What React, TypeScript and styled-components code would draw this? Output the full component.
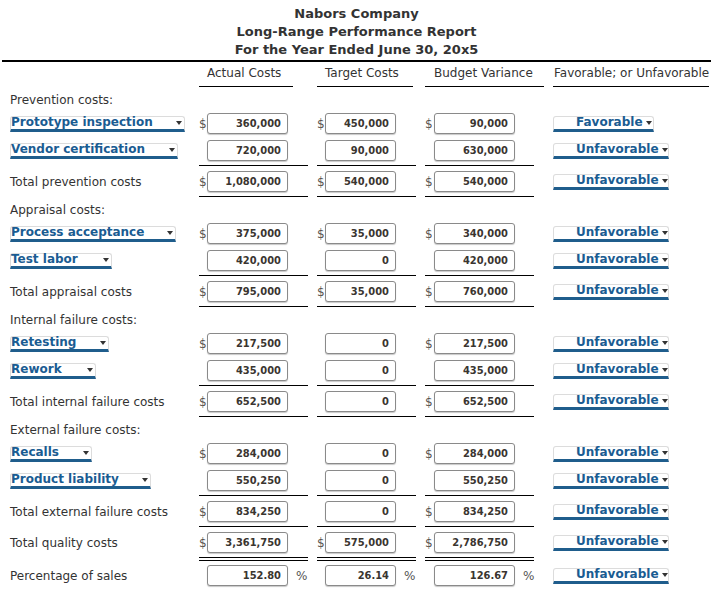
import styled, { createGlobalStyle } from "styled-components";

const GlobalStyle = createGlobalStyle`
  body {
    margin: 0;
    background: #fff;
    font-family: "DejaVu Sans", Verdana, sans-serif;
    color: #333;
  }
`;

const COLS = "197px 118px 108px 128px 158px";

const Report = styled.div`
  width: 709px;
  margin-left: 2px;
  font-size: 12px;
`;

const Heading = styled.header`
  padding: 5px 0 1px;
  border-bottom: 2px solid #000;
  text-align: center;
  font-weight: bold;
  font-size: 13px;
  line-height: 18px;
  color: #333;
`;

const HeadRow = styled.div`
  display: grid;
  grid-template-columns: ${COLS};
`;

const HeadCell = styled.div<{ $w: number; $pl: number }>`
  width: ${(p) => p.$w}px;
  padding: 3px 0 5px ${(p) => p.$pl}px;
  box-sizing: border-box;
  line-height: 16px;
  white-space: nowrap;
  border-bottom: 1px solid #000;
`;

const SectionTitle = styled.div`
  padding: 5px 0 2px 8px;
  line-height: 16px;
`;

const Money = styled.div<{ $w: number }>`
  width: ${(p) => p.$w}px;
  box-sizing: border-box;
`;

const Row = styled.div<{ $top: number; $bottom: number; $rule?: "single" | "double" }>`
  display: grid;
  grid-template-columns: ${COLS};
  & > * {
    display: flex;
    align-items: center;
    padding-top: ${(p) => p.$top}px;
    padding-bottom: ${(p) => p.$bottom}px;
    border-bottom: ${(p) =>
      p.$rule === "double"
        ? "4px double transparent"
        : p.$rule
        ? "1px solid transparent"
        : "0"};
  }
  & > ${Money} {
    border-bottom-color: #000;
  }
`;

const Label = styled.div`
  padding-left: 8px;
  line-height: 16px;
  white-space: nowrap;
`;

const Dollar = styled.span<{ $w: number }>`
  width: ${(p) => p.$w}px;
  flex: none;
  font-size: 12px;
  line-height: 16px;
  color: #5a5550;
`;

const Amount = styled.input<{ $w: number }>`
  width: ${(p) => p.$w}px;
  height: 21px;
  margin: 0;
  padding: 0 6px 0 0;
  box-sizing: border-box;
  border: 1px solid #8a8a8a;
  border-radius: 3px;
  box-shadow: 0 1px 1px rgba(0, 0, 0, 0.22);
  background: #fff;
  text-align: right;
  font-family: "DejaVu Sans Condensed", "DejaVu Sans", sans-serif;
  font-stretch: condensed;
  font-weight: bold;
  font-size: 11px;
  color: #3a3530;
  outline: none;
`;

const Percent = styled.span`
  margin-left: 8px;
  font-size: 12px;
  color: #555;
`;

const Select = styled.div<{ $w: number; $pl: number }>`
  display: inline-flex;
  align-items: center;
  width: ${(p) => p.$w}px;
  height: 16px;
  box-sizing: border-box;
  padding: 0 2px 0 ${(p) => p.$pl}px;
  border: 1px solid #dcdcdc;
  border-bottom: 3px solid #1f5d8c;
  border-radius: 3px 3px 0 0;
  background: #fff;
  color: #1a5c92;
  font-weight: bold;
  font-size: 12px;
  line-height: 13px;
  white-space: nowrap;
  cursor: pointer;
`;

const SelectText = styled.span`
  flex: 1;
`;

const Caret = styled.span`
  flex: none;
  width: 0;
  height: 0;
  margin: 1px 0 0 3px;
  border-style: solid;
  border-width: 4px 3px 0;
  border-color: #333 transparent transparent;
`;

const Picker = ({ text, w, pl = 0 }: { text: string; w: number; pl?: number }) => (
  <Select $w={w} $pl={pl}>
    <SelectText>{text}</SelectText>
    <Caret />
  </Select>
);

type Verdict = "Favorable" | "Unfavorable";

interface Line {
  label: string;
  pick?: number;
  vals: [string, string, string];
  dollar: boolean;
  verdict: Verdict;
}

const spec = [
  { w: 109, d: 8, iw: 81 },
  { w: 99, d: 8, iw: 71 },
  { w: 109, d: 9, iw: 81 },
];

const MoneyCells = ({ vals, dollar, pct }: { vals: string[]; dollar: boolean; pct?: boolean }) => (
  <>
    {vals.map((v, i) => (
      <Money key={i} $w={spec[i].w}>
        <Dollar $w={spec[i].d}>{dollar && v !== "0" ? "$" : ""}</Dollar>
        <Amount $w={spec[i].iw} readOnly value={v} />
        {pct && <Percent>%</Percent>}
      </Money>
    ))}
  </>
);

const VerdictCell = ({ v }: { v: Verdict }) => (
  <div>
    <Picker text={v} w={v === "Favorable" ? 101 : 116} pl={22} />
  </div>
);

interface Section {
  title: string;
  items: Line[];
  total: Line;
}

const sections: Section[] = [
  {
    title: "Prevention costs:",
    items: [
      { label: "Prototype inspection", pick: 175, vals: ["360,000", "450,000", "90,000"], dollar: true, verdict: "Favorable" },
      { label: "Vendor certification", pick: 168, vals: ["720,000", "90,000", "630,000"], dollar: false, verdict: "Unfavorable" },
    ],
    total: { label: "Total prevention costs", vals: ["1,080,000", "540,000", "540,000"], dollar: true, verdict: "Unfavorable" },
  },
  {
    title: "Appraisal costs:",
    items: [
      { label: "Process acceptance", pick: 166, vals: ["375,000", "35,000", "340,000"], dollar: true, verdict: "Unfavorable" },
      { label: "Test labor", pick: 102, vals: ["420,000", "0", "420,000"], dollar: false, verdict: "Unfavorable" },
    ],
    total: { label: "Total appraisal costs", vals: ["795,000", "35,000", "760,000"], dollar: true, verdict: "Unfavorable" },
  },
  {
    title: "Internal failure costs:",
    items: [
      { label: "Retesting", pick: 99, vals: ["217,500", "0", "217,500"], dollar: true, verdict: "Unfavorable" },
      { label: "Rework", pick: 86, vals: ["435,000", "0", "435,000"], dollar: false, verdict: "Unfavorable" },
    ],
    total: { label: "Total internal failure costs", vals: ["652,500", "0", "652,500"], dollar: true, verdict: "Unfavorable" },
  },
  {
    title: "External failure costs:",
    items: [
      { label: "Recalls", pick: 82, vals: ["284,000", "0", "284,000"], dollar: true, verdict: "Unfavorable" },
      { label: "Product liability", pick: 141, vals: ["550,250", "0", "550,250"], dollar: false, verdict: "Unfavorable" },
    ],
    total: { label: "Total external failure costs", vals: ["834,250", "0", "834,250"], dollar: true, verdict: "Unfavorable" },
  },
];

function App() {
  return (
    <Report>
      <GlobalStyle />
      <Heading>
        <div>Nabors Company</div>
        <div>Long-Range Performance Report</div>
        <div>For the Year Ended June 30, 20x5</div>
      </Heading>
      <HeadRow>
        <div />
        <HeadCell $w={94} $pl={8}>Actual Costs</HeadCell>
        <HeadCell $w={96} $pl={8}>Target Costs</HeadCell>
        <HeadCell $w={119} $pl={9}>Budget Variance</HeadCell>
        <HeadCell $w={156} $pl={1}>Favorable; or Unfavorable</HeadCell>
      </HeadRow>
      {sections.map((s) => (
        <div key={s.title}>
          <SectionTitle>{s.title}</SectionTitle>
          {s.items.map((it, i) => {
            const last = i === s.items.length - 1;
            return (
              <Row key={it.label} $top={3} $bottom={last ? 4 : 3} $rule={last ? "single" : undefined}>
                <Label>
                  <Picker text={it.label} w={it.pick ?? 100} />
                </Label>
                <MoneyCells vals={it.vals} dollar={it.dollar} />
                <VerdictCell v={it.verdict} />
              </Row>
            );
          })}
          <Row $top={5} $bottom={4} $rule="single">
            <Label>{s.total.label}</Label>
            <MoneyCells vals={s.total.vals} dollar />
            <VerdictCell v={s.total.verdict} />
          </Row>
        </div>
      ))}
      <Row $top={5} $bottom={4} $rule="double">
        <Label>Total quality costs</Label>
        <MoneyCells vals={["3,361,750", "575,000", "2,786,750"]} dollar />
        <VerdictCell v="Unfavorable" />
      </Row>
      <Row $top={4} $bottom={4}>
        <Label>Percentage of sales</Label>
        <MoneyCells vals={["152.80", "26.14", "126.67"]} dollar={false} pct />
        <VerdictCell v="Unfavorable" />
      </Row>
    </Report>
  );
}

export default App;
